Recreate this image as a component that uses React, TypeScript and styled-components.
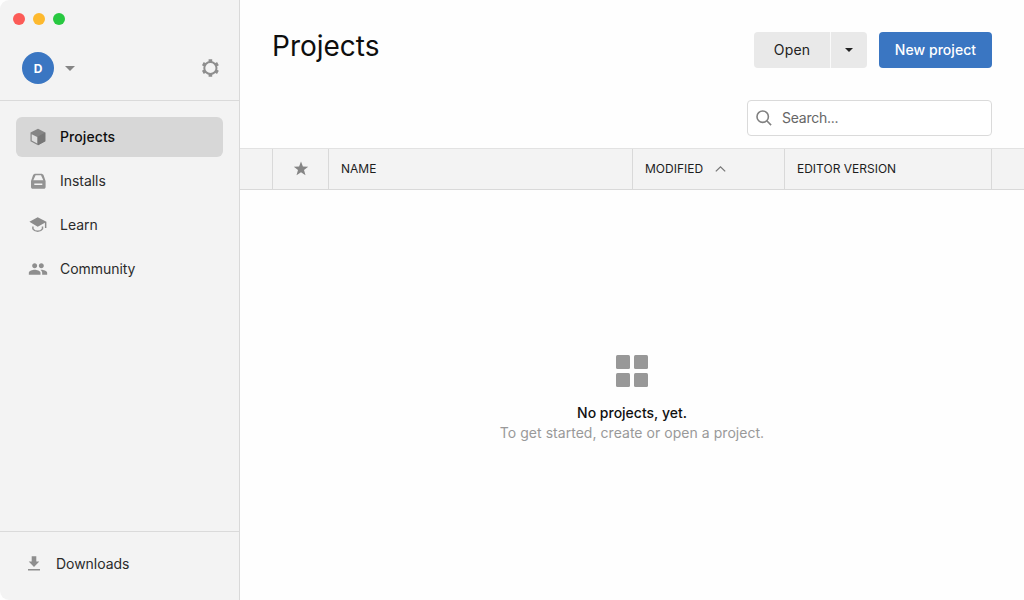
import React from 'react';
import styled, { createGlobalStyle } from 'styled-components';

const GlobalStyle = createGlobalStyle`
  * { box-sizing: border-box; }
  body { margin: 0; background: #fefefe; font-family: Inter, "Liberation Sans", sans-serif; overflow: hidden; }
  button { font-family: inherit; border: 0; padding: 0; }
`;

const Window = styled.div`
  display: flex;
  width: 1024px;
  height: 600px;
  background: #fefefe;
  border-radius: 9px;
  overflow: hidden;
`;

const Sidebar = styled.aside`
  display: flex;
  flex-direction: column;
  width: 240px;
  flex: none;
  background: #f3f3f3;
  border-right: 1px solid #d9d9d9;
`;

const SidebarTop = styled.div`
  height: 101px;
  flex: none;
  border-bottom: 1px solid #dadada;
`;

const TrafficLights = styled.div`
  display: flex;
  gap: 8px;
  padding: 13px 13px 0;
`;

const Light = styled.span<{ $color: string }>`
  width: 12px;
  height: 12px;
  border-radius: 50%;
  background: ${(p) => p.$color};
`;

const Account = styled.div`
  display: flex;
  align-items: center;
  padding: 27px 19px 0 22px;
`;

const Avatar = styled.div`
  display: flex;
  align-items: center;
  justify-content: center;
  width: 32px;
  height: 32px;
  border-radius: 50%;
  background: #3a76c2;
  color: #fff;
  font-size: 12px;
  font-weight: 700;
`;

const AccountCaret = styled.svg`
  margin-left: 11px;
`;

const GearButton = styled.button`
  display: flex;
  margin-left: auto;
  background: none;
`;

const Nav = styled.nav`
  display: flex;
  flex-direction: column;
  gap: 4px;
  padding: 16px 16px 0;
  flex: 1;
`;

const NavItem = styled.a<{ $active?: boolean }>`
  display: flex;
  align-items: center;
  gap: 12px;
  height: 40px;
  padding-left: 12px;
  border-radius: 6px;
  background: ${(p) => (p.$active ? '#d7d7d7' : 'transparent')};
  color: ${(p) => (p.$active ? '#0e0e0e' : '#2b2b2b')};
  font-size: 14px;
  font-weight: ${(p) => (p.$active ? 500 : 400)};
  letter-spacing: ${(p) => (p.$active ? '0.08px' : '-0.04px')};
`;

const Label = styled.span`
  padding-bottom: 2px;
`;

const SidebarFooter = styled.div`
  display: flex;
  gap: 12px;
  align-items: center;
  height: 69px;
  flex: none;
  padding: 0 24px 4px;
  border-top: 1px solid #dadada;
  color: #2b2b2b;
  font-size: 14px;
  letter-spacing: -0.04px;
`;

const Main = styled.main`
  display: flex;
  flex-direction: column;
  flex: 1;
  min-width: 0;
`;

const Header = styled.header`
  display: flex;
  justify-content: space-between;
  height: 148px;
  flex: none;
  padding: 32px 32px 0;
`;

const Title = styled.h1`
  margin: -3px 0 0;
  color: #0e0e0e;
  font-size: 28px;
  line-height: 34px;
  font-weight: 400;
`;

const Tools = styled.div`
  display: flex;
  flex-direction: column;
  align-items: flex-end;
  gap: 32px;
`;

const Actions = styled.div`
  display: flex;
  gap: 12px;
`;

const SplitButton = styled.div`
  display: flex;
  gap: 1px;
  border-radius: 4px;
  overflow: hidden;
  background: #fafafa;
`;

const Button = styled.button<{ $width: number; $primary?: boolean }>`
  display: flex;
  align-items: center;
  justify-content: center;
  width: ${(p) => p.$width}px;
  height: 36px;
  border-radius: ${(p) => (p.$primary ? '4px' : '0')};
  background: ${(p) => (p.$primary ? '#3a76c2' : '#e9e9e9')};
  color: ${(p) => (p.$primary ? '#fff' : '#222')};
  font-size: 14px;
  font-weight: ${(p) => (p.$primary ? 500 : 400)};
  letter-spacing: ${(p) => (p.$primary ? '0.05px' : '0.15px')};
`;

const SearchBox = styled.label`
  display: flex;
  align-items: center;
  gap: 9px;
  width: 245px;
  height: 36px;
  padding-left: 8px;
  border: 1px solid #dadada;
  border-radius: 4px;
  background: #fff;
`;

const SearchInput = styled.input`
  flex: 1;
  min-width: 0;
  padding: 0 0 2px;
  border: 0;
  outline: 0;
  background: none;
  font: 400 14px Inter, sans-serif;
  letter-spacing: -0.25px;
  &::placeholder { color: #666; opacity: 1; }
`;

const TableHead = styled.div`
  display: grid;
  grid-template-columns: 33px 56px 304px 152px 207px 32px;
  height: 42px;
  flex: none;
  background: #f3f3f3;
  border-top: 1px solid #e2e2e2;
  border-bottom: 1px solid #d9d9d9;
`;

const HeadCell = styled.div<{ $center?: boolean }>`
  display: flex;
  align-items: center;
  justify-content: ${(p) => (p.$center ? 'center' : 'flex-start')};
  gap: 12px;
  padding-left: ${(p) => (p.$center ? 0 : 12)}px;
  border-right: 1px solid #d9d9d9;
  color: #1d1d1d;
  font-size: 12px;
  &:last-child { border-right: 0; }
`;

const EmptyState = styled.section`
  display: flex;
  flex-direction: column;
  align-items: center;
  padding-top: 165px;
  font-size: 14px;
  line-height: 20px;
`;

const Tiles = styled.div`
  display: grid;
  grid-template-columns: 14px 14px;
  gap: 4px;
  margin-bottom: 16px;
`;

const Tile = styled.span`
  height: 14px;
  border-radius: 1.5px;
  background: #989898;
`;

const EmptyTitle = styled.strong`
  color: #111;
  font-weight: 500;
`;

const EmptyText = styled.span`
  color: #999;
  letter-spacing: 0.04px;
`;

const Gear = () => (
  <svg width="20" height="20" viewBox="0 0 20 20" fill="none" stroke="#8e8e8e">
    <circle cx="10.4" cy="10" r="6.1" strokeWidth="2" />
    {[0, 60, 120, 180, 240, 300].map((a) => (
      <path key={a} d="M8.6 2.6h3.6" strokeWidth="2.6" transform={`rotate(${a} 10.4 10)`} />
    ))}
  </svg>
);

const Cube = () => (
  <svg width="20" height="20" viewBox="0 0 20 20">
    <path d="M10 1.8 17.3 5.5v8.8L10 18.2 2.5 14.3V5.5z" fill="#858585" />
    <path d="M10 9.4 17.3 5.5v8.8L10 18.2z" fill="#777" />
    <path d="M3.7 7.3 9.2 10.1v6.3l-5.5-2.8z" fill="#dedede" />
  </svg>
);

const Drive = () => (
  <svg width="20" height="20" viewBox="0 0 20 20">
    <path
      fill="#939393"
      fillRule="evenodd"
      d="M7.5 2.8h5.6c1.2 0 1.9.5 2.5 1.5l2 5.7v5.9c0 1.1-.7 1.8-1.8 1.8h-11c-1.1 0-1.8-.7-1.8-1.8V10l2-5.7c.6-1 1.3-1.5 2.5-1.5zM7.6 4.3 5.3 9.2h10l-2.3-4.9zM6.3 12.4v1.5h8v-1.5z"
    />
  </svg>
);

const Cap = () => (
  <svg width="20" height="20" viewBox="0 0 20 20">
    <path d="M9.7 2.2 18.4 6.7v6.3h-1.5V7.7l-7.2 4.1L1.4 6.8z" fill="#8c8c8c" />
    <path d="M4.9 11.4v2.4c1.1 1.6 2.9 2.5 4.8 2.5s3.7-.9 4.8-2.5v-2.4" fill="none" stroke="#939393" strokeWidth="1.5" />
  </svg>
);

const People = () => (
  <svg width="20" height="20" viewBox="0 0 24 24" fill="#8e8e8e">
    <path d="M16 11c1.66 0 2.99-1.34 2.99-3S17.66 5 16 5s-3 1.34-3 3 1.34 3 3 3zm-8 0c1.66 0 2.99-1.34 2.99-3S9.66 5 8 5 5 6.34 5 8s1.34 3 3 3zm0 2c-2.33 0-7 1.17-7 3.5V19h14v-2.5c0-2.33-4.67-3.5-7-3.5zm8 0c-.29 0-.62.02-.97.05 1.16.84 1.97 1.97 1.97 3.45V19h6v-2.5c0-2.33-4.67-3.5-7-3.5z" />
  </svg>
);

const Download = () => (
  <svg width="20" height="20" viewBox="0 0 20 20" fill="#8e8e8e">
    <path d="M7.7 2.3h4.6v5.2h3L10 13 4.7 7.5h3zM4 15.1h12v1.5H4z" />
  </svg>
);

const Caret = ({ color }: { color: string }) => (
  <svg width="8" height="4" viewBox="0 0 8 4">
    <path d="M0 0h8L4 4z" fill={color} />
  </svg>
);

const navItems = [
  { label: 'Projects', icon: <Cube />, active: true },
  { label: 'Installs', icon: <Drive /> },
  { label: 'Learn', icon: <Cap /> },
  { label: 'Community', icon: <People /> },
];

export default function App() {
  return (
    <>
      <GlobalStyle />
      <Window>
        <Sidebar>
          <SidebarTop>
            <TrafficLights>
              <Light $color="#fc5b57" />
              <Light $color="#fdb92e" />
              <Light $color="#27c840" />
            </TrafficLights>
            <Account>
              <Avatar>D</Avatar>
              <AccountCaret width="10" height="5" viewBox="0 0 10 5">
                <path d="M0 0h10L5 5z" fill="#858585" />
              </AccountCaret>
              <GearButton aria-label="Preferences"><Gear /></GearButton>
            </Account>
          </SidebarTop>
          <Nav>
            {navItems.map((item) => (
              <NavItem key={item.label} $active={item.active}>
                {item.icon}
                <Label>{item.label}</Label>
              </NavItem>
            ))}
          </Nav>
          <SidebarFooter>
            <Download />
            <Label>Downloads</Label>
          </SidebarFooter>
        </Sidebar>
        <Main>
          <Header>
            <Title>Projects</Title>
            <Tools>
              <Actions>
                <SplitButton>
                  <Button $width={76}><Label>Open</Label></Button>
                  <Button $width={36} aria-label="Open options"><Caret color="#222" /></Button>
                </SplitButton>
                <Button $width={113} $primary><Label>New project</Label></Button>
              </Actions>
              <SearchBox>
                <svg width="17" height="17" viewBox="0 0 17 17" fill="none" stroke="#808080" strokeWidth="1.6">
                  <circle cx="6.7" cy="6.7" r="5.7" />
                  <path d="m10.8 10.8 4.3 4.3" />
                </svg>
                <SearchInput placeholder="Search..." />
              </SearchBox>
            </Tools>
          </Header>
          <TableHead>
            <HeadCell />
            <HeadCell $center>
              <svg width="16" height="16" viewBox="0 0 16 16">
                <path d="m8 .5 1.9 5 5.3.2-4.2 3.3 1.5 5.2L8 11.2l-4.5 3 1.5-5.2L.8 5.7l5.3-.2z" fill="#858585" />
              </svg>
            </HeadCell>
            <HeadCell><Label>NAME</Label></HeadCell>
            <HeadCell>
              <Label>MODIFIED</Label>
              <svg width="11" height="6" viewBox="0 0 11 6" fill="none" stroke="#777" strokeWidth="1.3">
                <path d="M.8 5.4 5.5.9l4.7 4.5" />
              </svg>
            </HeadCell>
            <HeadCell><Label>EDITOR VERSION</Label></HeadCell>
            <HeadCell />
          </TableHead>
          <EmptyState>
            <Tiles>
              <Tile /><Tile /><Tile /><Tile />
            </Tiles>
            <EmptyTitle>No projects, yet.</EmptyTitle>
            <EmptyText>To get started, create or open a project.</EmptyText>
          </EmptyState>
        </Main>
      </Window>
    </>
  );
}
